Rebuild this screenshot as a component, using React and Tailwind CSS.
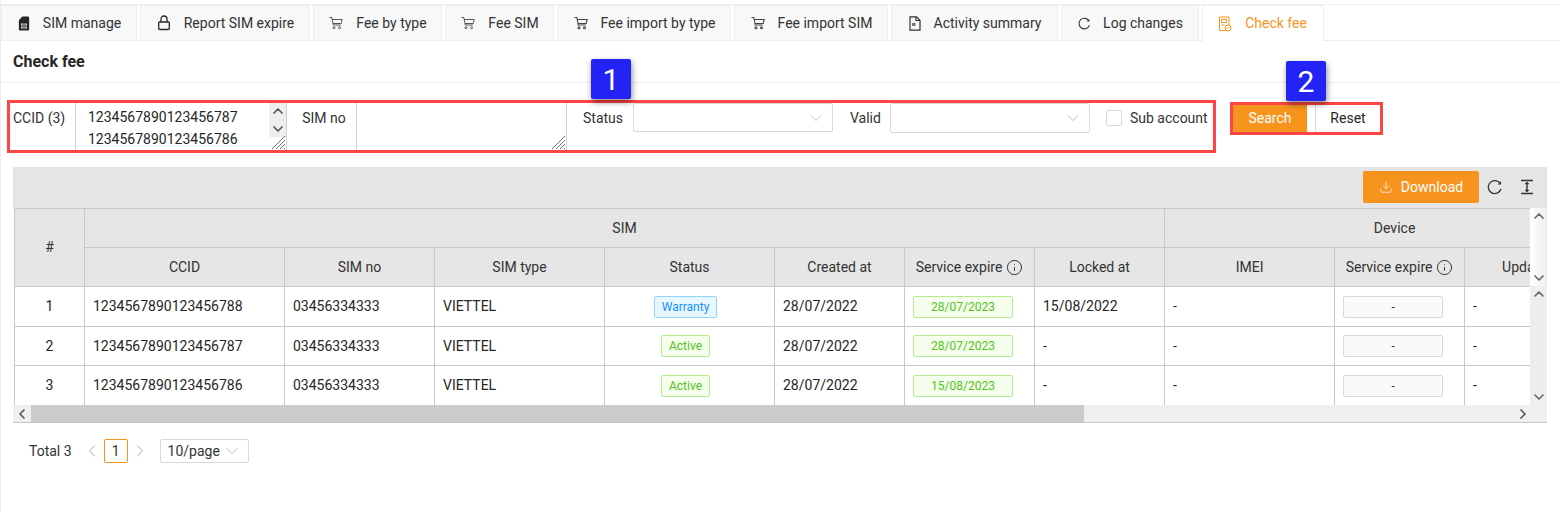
import React from "react";
import { ChevronUp, ChevronDown, ChevronLeft, ChevronRight, Info, Download } from "lucide-react";

const SimIcon = () => (
  <svg width="12" height="15" viewBox="0 0 14 16" preserveAspectRatio="none"><path fillRule="evenodd" fill="#262626" d="M5 .5h6.500A1.500 1.500 0 0 1 13 2v12a1.500 1.500 0 0 1-1.500 1.500h-9A1.500 1.500 0 0 1 1 14V4.500zM3.500 8v1.200h2V8zm2.700 0v1.200h1.600V8zm2.300 0v1.200h2V8zm-5 2v1.200h2V10zm2.700 0v1.200h1.600V10zm2.300 0v1.200h2V10zm-5 2v1.200h2V12zm2.700 0v1.200h1.600V12zm2.300 0v1.200h2V12z" /></svg>
);
const LockIcon = () => (
  <svg width="14" height="16" viewBox="0 0 14 16" fill="none" stroke="#262626" strokeWidth="1.300"><rect x="1.700" y="7" width="10.600" height="7.500" rx="1" /><path d="M4 7V4a3 3 0 0 1 6 0v3" /></svg>
);
const CartIcon = ({ dark }) => (
  <svg width="14" height="14" viewBox="0 0 14 14" fill="none" stroke={dark ? "#444" : "#555"} strokeWidth={dark ? 1.100 : 1}><path d="M.5 1.500h2.300l1.500 7.500h7.500" /><path d="M3.200 3.500h10l-1 4H4" /><circle cx="5" cy="11.700" r="1" /><circle cx="10.500" cy="11.700" r="1" /></svg>
);
const DocIcon = () => (
  <svg width="12" height="15" viewBox="0 0 12 15" fill="none" stroke="#333" strokeWidth="1.200"><path d="M1 .8h6.500L11 4.300v9.900H1z" /><path d="M3 7h3.500v3H3z" fill="#777" stroke="none" /><path d="M7 1v3.500h4" /></svg>
);
const ReloadIcon = ({ size = 16 }) => (
  <svg width={size} height={size} viewBox="0 0 16 16" fill="none" stroke="#333" strokeWidth="1.300"><path d="M13.500 5A6.500 6.500 0 1 0 14 10" /><path d="M14 2v3.400h-3.200" fill="#333" stroke="none" /></svg>
);
const CheckFeeIcon = () => (
  <svg width="14" height="16" viewBox="0 0 14 16" fill="none" stroke="#f7941d" strokeWidth="1"><path d="M9.500 14.500H1.500V1h9.500v8" /><path d="M3.500 3.500h5v3h-5zM3.500 9h3" /><circle cx="10" cy="12" r="3" /><path d="M8.800 12.700l2.400-1.700" /></svg>
);
const HeightIcon = () => (
  <svg width="14" height="16" viewBox="0 0 14 16" fill="none" stroke="#333" strokeWidth="1.400"><path d="M1 1.500h12M1 14.500h12M7 3.500v9" /><path d="M5 5l2-2 2 2zM5 11l2 2 2-2z" fill="#333" strokeWidth="0.500" /></svg>
);
const Resize = () => (
  <svg width="15" height="15" viewBox="0 0 15 15" stroke="#777" strokeWidth="1" className="shrink-0">
    <path d="M1 14 14 1M5 14 14 5M9 14l5-5M13 14l1-1" />
  </svg>
);

const tabs = [
  ["SIM manage", <SimIcon />, "w-[136px] gap-[11px] pr-[1px]"],
  ["Report SIM expire", <LockIcon />, "w-[170px] gap-[12px]"],
  ["Fee by type", <CartIcon />, "w-[129px] gap-[12px]"],
  ["Fee SIM", <CartIcon />, "w-[109px] gap-[12px]"],
  ["Fee import by type", <CartIcon dark />, "w-[174px] gap-[12px]"],
  ["Fee import SIM", <CartIcon dark />, "w-[154px] gap-[12px]"],
  ["Activity summary", <DocIcon />, "w-[167px] gap-[11px] pr-[1px]"],
  ["Log changes", <ReloadIcon size={13} />, "w-[138px] gap-[11px] pr-[1px]"],
];

const Tab = ({ label, icon, width }) => (
  <div className={`${width} h-full flex items-center justify-center bg-[#f8f8f8] border border-b-0 border-[#eeeeee] text-[#333] text-[14px]`}>
    <span className="flex w-[16px] justify-center">{icon}</span>
    <span>{label}</span>
  </div>
);

const Select = ({ width, height }) => (
  <div className={`${width} ${height} border border-[#d9d9d9] rounded-[2px] flex items-center justify-end pr-[6px] bg-white`}>
    <ChevronDown size={20} strokeWidth={1.100} className="text-[#bbbbbb]" />
  </div>
);

const cols = [70, 200, 150, 170, 170, 130, 130, 130, 170, 130, 160];

const Th = ({ children, className = "", ...rest }) => (
  <th {...rest} className={`border-r border-b border-[#c8c8c8] bg-[#e6e6e6] font-normal text-[#333] text-center p-0 overflow-hidden whitespace-nowrap ${className}`}>
    {children}
  </th>
);
const Td = ({ children, className = "" }) => (
  <td className={`border-r border-b border-[#c8c8c8] px-[8px] py-0 text-[#262626] whitespace-nowrap overflow-hidden ${className}`}>{children}</td>
);
const Tag = ({ children, tone, width, className = "" }) => {
  const tones = {
    blue: "bg-[#e6f7ff] border-[#91d5ff] text-[#1890ff]",
    green: "bg-[#f6ffed] border-[#b7eb8f] text-[#52c41a]",
    gray: "bg-[#fafafa] border-[#d9d9d9] text-[#333]",
  };
  return (
    <span className={`inline-flex items-center justify-center h-[22px] border rounded-[2px] text-[12px] ${tones[tone]} ${width} ${className}`}>
      {children}
    </span>
  );
};

const ExpireHead = () => (
  <span className="inline-flex items-center justify-center gap-[4px]">
    Service expire <Info size={17} strokeWidth={1.400} className="text-[#333]" />
  </span>
);

const rows = [
  { n: 1, ccid: "1234567890123456788", st: ["Warranty", "blue", "w-[63px]"], exp: "28/07/2023", locked: "15/08/2022", h: "h-[40px]" },
  { n: 2, ccid: "1234567890123456787", st: ["Active", "green", "w-[49px]"], exp: "28/07/2023", locked: "-", h: "h-[39px]" },
  { n: 3, ccid: "1234567890123456786", st: ["Active", "green", "w-[49px]"], exp: "15/08/2023", locked: "-", h: "h-[40px]" },
];

const Badge = ({ children, pos }) => (
  <div className={`absolute ${pos} w-[40px] h-[40px] bg-[#2323f5] rounded-[2px] shadow-[1px_3px_6px_rgba(0,0,0,0.45)] text-white text-[30px] flex items-center justify-center`}>
    {children}
  </div>
);

export default function App() {
  return (
    <div className="relative w-[1560px] h-[512px] overflow-hidden bg-white border-l border-[#eeeeee] text-[14px] text-[#333]" style={{ fontFamily: "Roboto, sans-serif" }}>
      <div className="h-[5px] border-b border-[#eeeeee]" />
      <div className="h-[36px] flex gap-[3px] border-b border-[#eeeeee]">
        {tabs.map(([l, i, w]) => <Tab key={l} label={l} icon={i} width={w} />)}
        <div className="w-[122px] h-[36px] flex items-center justify-center gap-[12px] pr-[1px] bg-white border border-b-0 border-[#eeeeee] text-[#f7941d]">
          <CheckFeeIcon /><span className="ml-[1px]">Check fee</span>
        </div>
      </div>
      <div className="h-[42px] border-b border-[#eeeeee] flex items-center pl-[12px] font-bold text-[16px] text-[#262626]">Check fee</div>

      <div className="flex items-start pl-[6px] mt-[17px]">
        <div className="w-[1209px] h-[53px] border-[3px] border-[#ff4444] flex items-start">
          <div className="h-full w-[66px] shrink-0 border-r border-[#d0d0d0] flex items-start pt-[5px] pl-[3px] leading-[20px]">CCID (3)</div>
          <div className="relative h-full w-[211px] shrink-0 border-r border-[#d0d0d0] pl-[12px] text-[#262626] leading-[22px] pt-[3px]">
            <div>1234567890123456787</div>
            <div>1234567890123456786</div>
            <div className="absolute right-0 top-0 w-[17px] h-[34px] bg-[#eeeeee] flex flex-col items-center justify-between">
              <ChevronUp size={16} strokeWidth={2.500} className="text-[#555]" />
              <ChevronDown size={16} strokeWidth={2.500} className="text-[#555]" />
            </div>
            <div className="absolute right-0 bottom-0"><Resize /></div>
          </div>
          <div className="h-full w-[70px] shrink-0 border-r border-[#d0d0d0] flex items-start justify-center pt-[5px] pl-[5px] leading-[20px]">SIM no</div>
          <div className="relative h-full w-[210px] shrink-0 border-r border-[#d0d0d0]">
            <div className="absolute right-0 bottom-0"><Resize /></div>
          </div>
          <div className="pl-[16px] w-[66px] shrink-0 pt-[5px] leading-[20px]">Status</div>
          <Select width="w-[200px]" height="h-[29px]" />
          <div className="w-[57px] shrink-0 pl-[17px] pt-[5px] leading-[20px]">Valid</div>
          <Select width="w-[200px]" height="h-[30px]" />
          <div className="ml-[16px] mt-[7px] w-[16px] h-[16px] border border-[#d9d9d9] rounded-[2px] bg-white shrink-0" />
          <div className="pl-[8px] pt-[5px] leading-[20px] whitespace-nowrap">Sub account</div>
        </div>
        <div className="ml-[14px] mt-[2px] w-[153px] h-[33px] border-[3px] border-[#ff4444] flex text-[14px]">
          <div className="w-[74px] bg-[#f7941d] text-white flex items-center justify-center">Search</div>
          <div className="w-[8px] bg-white" />
          <div className="flex-1 border-l border-[#d9d9d9] flex items-center justify-center text-[#262626]">Reset</div>
        </div>
      </div>

      <div className="ml-[12px] mt-[14px] w-[1534px]">
        <div className="h-[41px] bg-[#e5e5e5] flex items-center justify-end pb-[1px]">
          <div className="w-[116px] h-[32px] bg-[#f7941d] rounded-[2px] text-white flex items-center justify-center gap-[8px]">
            <Download size={14} strokeWidth={1.200} />Download
          </div>
          <span className="ml-[8px] flex w-[16px] justify-center"><ReloadIcon /></span>
          <span className="ml-[17px] mr-[13px] flex w-[14px] justify-center"><HeightIcon /></span>
        </div>
        <div className="flex h-[197px]">
          <div className="ml-[1px] w-[1516px] h-full overflow-hidden border-l border-[#c8c8c8]">
            <table className="table-fixed border-separate border-spacing-0 w-[1610px] text-[14px]">
              <colgroup>{cols.map((w, i) => <col key={i} style={{ width: w }} />)}</colgroup>
              <thead>
                <tr className="h-[40px]">
                  <Th rowSpan={2} className="border-t">#</Th>
                  <Th colSpan={7} className="border-t">SIM</Th>
                  <Th colSpan={3} className="border-t">Device</Th>
                </tr>
                <tr className="h-[39px]">
                  <Th>CCID</Th>
                  <Th>SIM no</Th>
                  <Th>SIM type</Th>
                  <Th>Status</Th>
                  <Th>Created at</Th>
                  <Th><ExpireHead /></Th>
                  <Th>Locked at</Th>
                  <Th>IMEI</Th>
                  <Th><ExpireHead /></Th>
                  <Th className="border-r-0 text-left pl-[37px]">Updated at</Th>
                </tr>
              </thead>
              <tbody>
                {rows.map((r) => (
                  <tr key={r.n} className={r.h}>
                    <Td className="text-center">{r.n}</Td>
                    <Td>{r.ccid}</Td>
                    <Td>03456334333</Td>
                    <Td>VIETTEL</Td>
                    <Td className="text-center"><Tag tone={r.st[1]} width={r.st[2]} className="mr-[8px]">{r.st[0]}</Tag></Td>
                    <Td>28/07/2022</Td>
                    <Td><Tag tone="green" width="w-[100px]">{r.exp}</Tag></Td>
                    <Td>{r.locked}</Td>
                    <Td>-</Td>
                    <Td><Tag tone="gray" width="w-[100px]">-</Tag></Td>
                    <Td className="border-r-0">-</Td>
                  </tr>
                ))}
              </tbody>
            </table>
          </div>
          <div className="w-[17px] h-full flex flex-col shrink-0">
            <div className="h-[78px] bg-gradient-to-r from-white to-[#eeeeee] flex flex-col items-center justify-between">
              <ChevronUp size={16} strokeWidth={2.500} className="text-[#666]" />
              <ChevronDown size={16} strokeWidth={2.500} className="text-[#666]" />
            </div>
            <div className="flex-1 bg-[#eeeeee] flex flex-col items-center justify-between">
              <ChevronUp size={16} strokeWidth={2.500} className="text-[#666]" />
              <ChevronDown size={16} strokeWidth={2.500} className="text-[#666]" />
            </div>
          </div>
        </div>
        <div className="h-[18px] bg-[#f0f0f0] border-b border-[#c8c8c8] flex">
          <div className="w-[18px] flex items-center justify-center"><ChevronLeft size={16} strokeWidth={2.500} className="text-[#555]" /></div>
          <div className="w-[1053px] bg-[#cbcbcb]" />
          <div className="flex-1 flex items-center justify-end pr-[16px]"><ChevronRight size={16} strokeWidth={2.500} className="text-[#555]" /></div>
        </div>
      </div>

      <div className="flex items-center h-[24px] mt-[16px] pl-[28px] text-[14px] text-[#333]">
        <span>Total 3</span>
        <ChevronLeft size={20} strokeWidth={1} className="ml-[10px] text-[#999]" />
        <div className="ml-[2px] w-[24px] h-[24px] border border-[#f7941d] rounded-[2px] flex items-center justify-center">1</div>
        <ChevronRight size={20} strokeWidth={1} className="ml-[2px] text-[#999]" />
        <div className="ml-[10px] w-[89px] h-[24px] border border-[#d9d9d9] rounded-[2px] flex items-center pl-[7px] gap-[2px]">
          10/page <ChevronDown size={20} strokeWidth={1} className="text-[#aaa]" />
        </div>
      </div>

      <Badge pos="left-[590px] top-[59px]">1</Badge>
      <Badge pos="left-[1285px] top-[61px]">2</Badge>
    </div>
  );
}
